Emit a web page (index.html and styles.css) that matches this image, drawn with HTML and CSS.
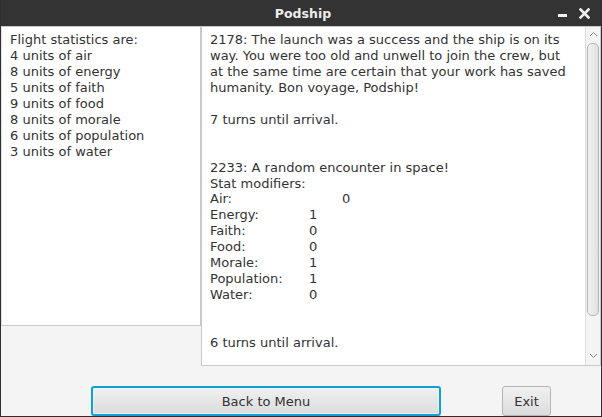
FILE: index.html
```html
<!DOCTYPE html>
<html>
<head>
<meta charset="utf-8">
<link rel="stylesheet" href="styles.css">
</head>
<body>
<div class="window">
  <div class="titlebar">
    <span class="title">Podship</span>
    <div class="controls">
      <span class="ctl-min"></span>
      <svg class="ctl-close" width="11" height="11" viewBox="0 0 11 11"><path d="M1.5 1.5 L9.5 9.5 M9.5 1.5 L1.5 9.5" stroke="#f0f0f0" stroke-width="2.6" stroke-linecap="square"/></svg>
    </div>
  </div>
  <div class="content">
    <div class="panes">
      <div class="pane left">
        <div class="text">
          <div>Flight statistics are:</div>
          <div>4 units of air</div>
          <div>8 units of energy</div>
          <div>5 units of faith</div>
          <div>9 units of food</div>
          <div>8 units of morale</div>
          <div>6 units of population</div>
          <div>3 units of water</div>
        </div>
      </div>
      <div class="pane right">
        <div class="text">
          <div>2178: The launch was a success and the ship is on its way. You were too old and unwell to join the crew, but at the same time are certain that your work has saved humanity. Bon voyage, Podship!</div>
          <div class="blank"></div>
          <div>7 turns until arrival.</div>
          <div class="blank"></div>
          <div class="blank"></div>
          <div>2233: A random encounter in space!</div>
          <div>Stat modifiers:</div>
          <div><span class="lbl wide">Air:</span>0</div>
          <div><span class="lbl">Energy:</span>1</div>
          <div><span class="lbl">Faith:</span>0</div>
          <div><span class="lbl">Food:</span>0</div>
          <div><span class="lbl">Morale:</span>1</div>
          <div><span class="lbl">Population:</span>1</div>
          <div><span class="lbl">Water:</span>0</div>
          <div class="blank"></div>
          <div class="blank"></div>
          <div>6 turns until arrival.</div>
        </div>
        <div class="scrollbar">
          <svg class="arrow" width="9" height="6" viewBox="0 0 9 6"><path d="M1 5 L4.5 1.5 L8 5" fill="none" stroke="#8a8a8a" stroke-width="1"/></svg>
          <div class="thumb"></div>
          <svg class="arrow" width="9" height="6" viewBox="0 0 9 6"><path d="M1 1 L4.5 4.5 L8 1" fill="none" stroke="#8a8a8a" stroke-width="1"/></svg>
        </div>
      </div>
    </div>
    <div class="buttons">
      <button class="btn back">Back to Menu</button>
      <button class="btn exit">Exit</button>
    </div>
  </div>
</div>
</body>
</html>
```
FILE: styles.css
```css
html, body {
  margin: 0;
  padding: 0;
  background: #f4f4f4;
}
.window {
  width: 602px;
  height: 417px;
  box-sizing: border-box;
  border-left: 1px solid #2f2f2f;
  border-right: 1px solid #2f2f2f;
  border-bottom: 1px solid #2f2f2f;
  display: flex;
  flex-direction: column;
  overflow: hidden;
  font-family: "DejaVu Sans", sans-serif;
  font-size: 13px;
  color: #333333;
}
.titlebar {
  height: 26px;
  flex: none;
  background: #333333;
  margin: 0 -1px;
  display: flex;
  align-items: center;
  justify-content: center;
  position: relative;
}
.title {
  color: #ececec;
  font-weight: bold;
  font-size: 12.5px;
  margin-left: 4px;
}
.controls {
  position: absolute;
  right: 12px;
  top: 8px;
  display: flex;
  align-items: center;
  gap: 12px;
}
.ctl-min {
  width: 9px;
  height: 3px;
  background: #f0f0f0;
  margin-top: 3px;
}
.ctl-close {
  display: block;
}
.content {
  flex: 1;
  display: flex;
  flex-direction: column;
}
.panes {
  display: flex;
  align-items: flex-start;
}
.pane {
  background: #ffffff;
  box-sizing: border-box;
  border: 1px solid #c8c8c8;
}
.left {
  width: 200px;
  height: 300px;
  border-left-color: #e0e0e0;
}
.right {
  width: 400px;
  height: 340px;
  display: flex;
  border-right-color: #c8c8c8;
}
.text {
  line-height: 15.95px;
  padding: 5px 0 0 8px;
  white-space: normal;
}
.right .text {
  flex: 1;
  padding-right: 18px;
}
.blank {
  height: 15.95px;
}
.lbl {
  display: inline-block;
  width: 99px;
}
.lbl.wide {
  width: 132px;
}
.scrollbar {
  width: 15px;
  flex: none;
  background: #f4f4f4;
  border-left: 1px solid #dcdcdc;
  box-sizing: border-box;
  display: flex;
  flex-direction: column;
  align-items: center;
  padding: 2px 0 4px;
}
.arrow {
  display: block;
  margin: 2px 0;
}
.thumb {
  width: 12px;
  flex: 1;
  margin: 4px 0 35px;
  box-sizing: border-box;
  border: 1px solid #b4b4b4;
  border-radius: 5px;
  background: linear-gradient(to right, #f2f2f2, #e0e0e0);
}
.buttons {
  display: flex;
  margin-top: 20px;
  padding-left: 90px;
}
.btn {
  height: 30px;
  box-sizing: border-box;
  font-family: "DejaVu Sans", sans-serif;
  font-size: 13px;
  color: #333333;
  border: 1px solid #b5b5b5;
  border-radius: 3px;
  background: linear-gradient(to bottom, #f0f0f0, #dcdcdc);
  padding: 0;
}
.back {
  width: 350px;
  border: 2px solid #0ea1d8;
  box-shadow: inset 0 0 0 1px #e8f4fa;
}
.exit {
  width: 49px;
  margin-left: 61px;
}
```
